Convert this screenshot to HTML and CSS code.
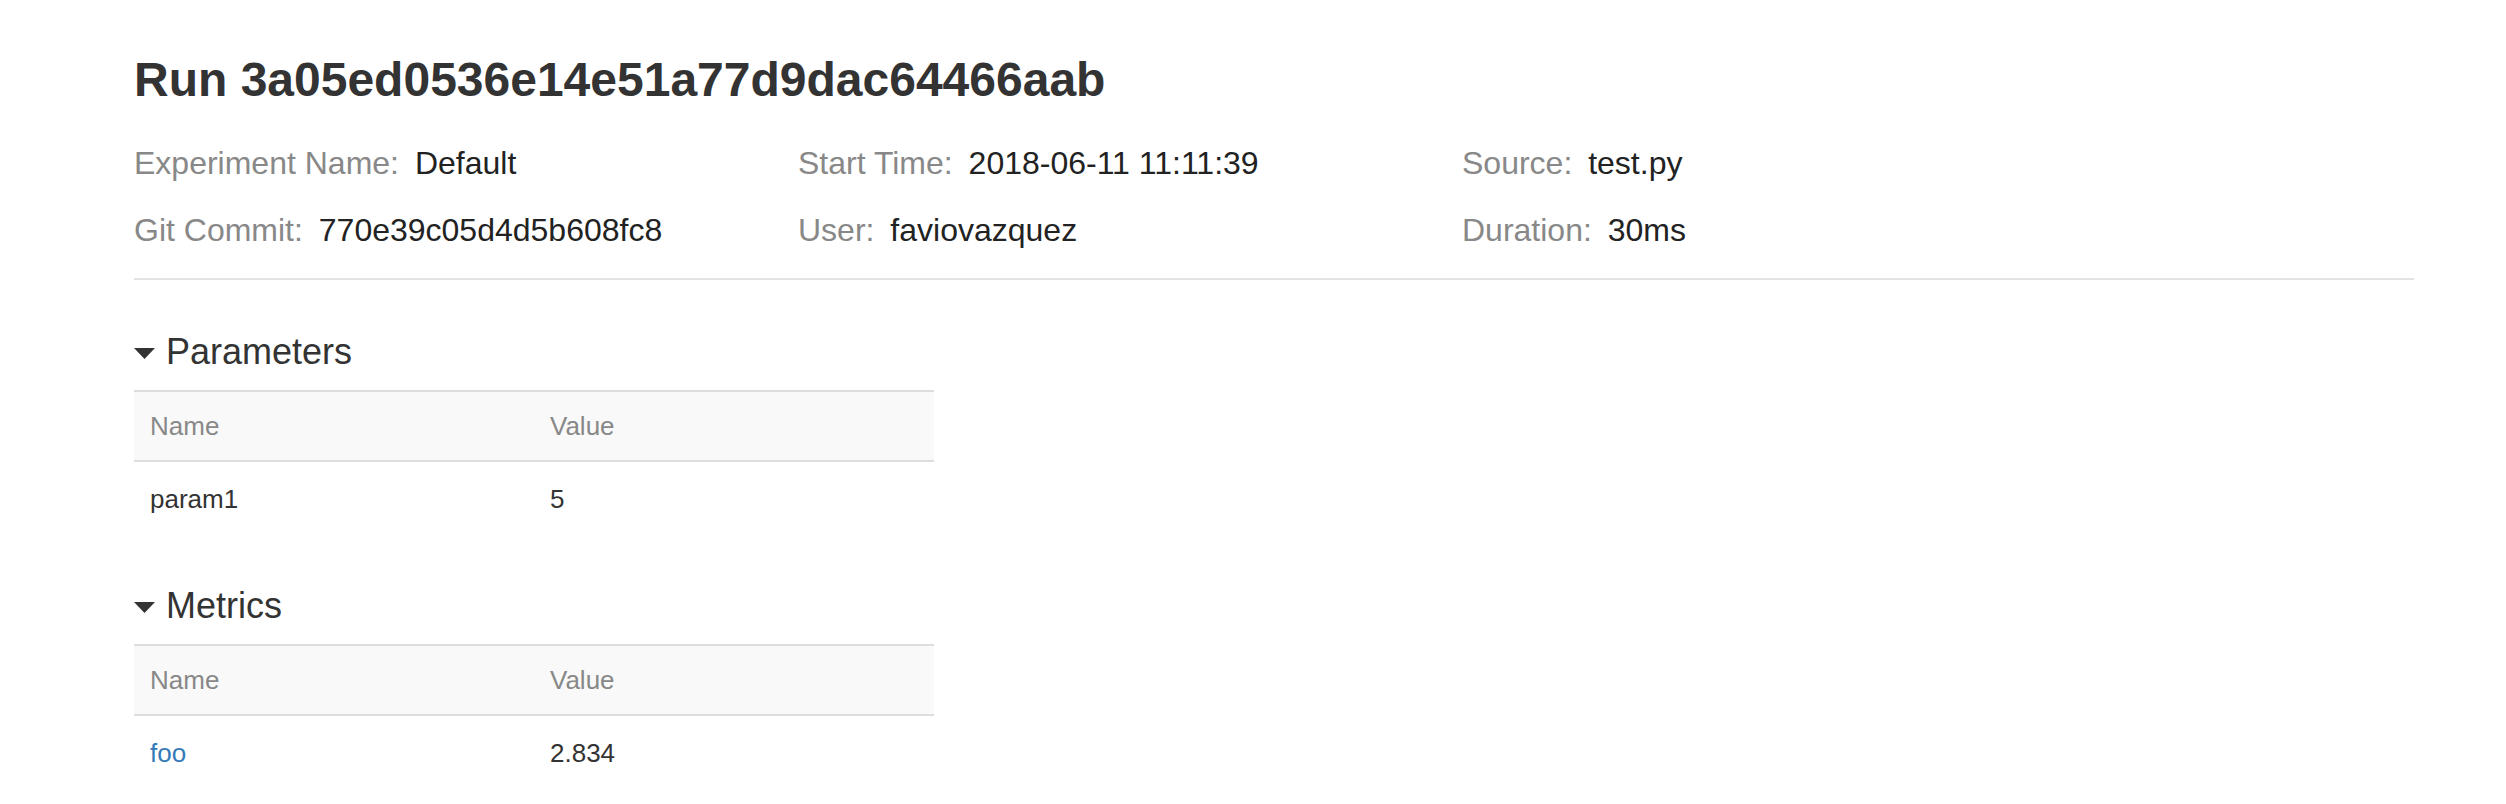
FILE: index.html
```html
<!DOCTYPE html>
<html>
<head>
<meta charset="utf-8">
<title>Run 3a05ed0536e14e51a77d9dac64466aab</title>
<link rel="stylesheet" href="styles.css">
</head>
<body>
<main class="page">
  <h1 class="run-title">Run 3a05ed0536e14e51a77d9dac64466aab</h1>
  <div class="meta-grid">
    <div class="meta-item"><span class="meta-label">Experiment Name:</span> <span class="meta-value">Default</span></div>
    <div class="meta-item"><span class="meta-label">Start Time:</span> <span class="meta-value">2018-06-11 11:11:39</span></div>
    <div class="meta-item"><span class="meta-label">Source:</span> <span class="meta-value">test.py</span></div>
    <div class="meta-item"><span class="meta-label">Git Commit:</span> <span class="meta-value">770e39c05d4d5b608fc8</span></div>
    <div class="meta-item"><span class="meta-label">User:</span> <span class="meta-value">faviovazquez</span></div>
    <div class="meta-item"><span class="meta-label">Duration:</span> <span class="meta-value">30ms</span></div>
  </div>
  <hr class="divider">

  <section class="section">
    <h2 class="section-title">
      <svg class="caret" width="21" height="11" viewBox="0 0 21 11"><polygon points="0,0 21,0 10.5,11" fill="#333"/></svg>
      <span>Parameters</span>
    </h2>
    <table class="kv-table">
      <thead><tr><th>Name</th><th>Value</th></tr></thead>
      <tbody><tr><td>param1</td><td>5</td></tr></tbody>
    </table>
  </section>

  <section class="section">
    <h2 class="section-title">
      <svg class="caret" width="21" height="11" viewBox="0 0 21 11"><polygon points="0,0 21,0 10.5,11" fill="#333"/></svg>
      <span>Metrics</span>
    </h2>
    <table class="kv-table">
      <thead><tr><th>Name</th><th>Value</th></tr></thead>
      <tbody><tr><td><a class="metric-link" href="#">foo</a></td><td>2.834</td></tr></tbody>
    </table>
  </section>
</main>
</body>
</html>
```
FILE: styles.css
```css
html, body {
  margin: 0;
  padding: 0;
  background: #fff;
}

body {
  font-family: "Liberation Sans", Arial, Helvetica, sans-serif;
  color: #333;
}

.page {
  width: 2280px;
  margin-left: 134px;
  padding-top: 52px;
}

.run-title {
  margin: 0;
  font-size: 48px;
  line-height: 56px;
  font-weight: 700;
  color: #333;
}

.meta-grid {
  margin-top: 22px;
  display: grid;
  grid-template-columns: repeat(3, 664px);
  font-size: 32px;
  line-height: 67px;
}

.meta-item {
  white-space: nowrap;
}

.meta-label {
  color: #888;
}

.meta-value {
  color: #222;
  margin-left: 7px;
}

.divider {
  margin: 14px 0 0 0;
  border: 0;
  border-top: 2px solid #e3e3e3;
  height: 0;
}

.section {
  padding-top: 50px;
}

.section-title {
  margin: 0;
  display: flex;
  align-items: center;
  font-size: 36px;
  line-height: 44px;
  font-weight: 400;
  color: #333;
}

.caret {
  margin-top: 2px;
  margin-right: 11px;
  flex: none;
}

.kv-table {
  margin-top: 16px;
  width: 800px;
  border-collapse: collapse;
  table-layout: fixed;
  font-size: 26px;
  line-height: 36px;
}

.kv-table th {
  text-align: left;
  font-weight: 400;
  color: #888;
  background: #f9f9f9;
  border-top: 2px solid #ddd;
  border-bottom: 2px solid #ddd;
  padding: 16px 16px;
  width: 50%;
}

.kv-table td {
  color: #333;
  padding: 19px 16px 17px 16px;
}

.metric-link {
  color: #337ab7;
  text-decoration: none;
}
```
